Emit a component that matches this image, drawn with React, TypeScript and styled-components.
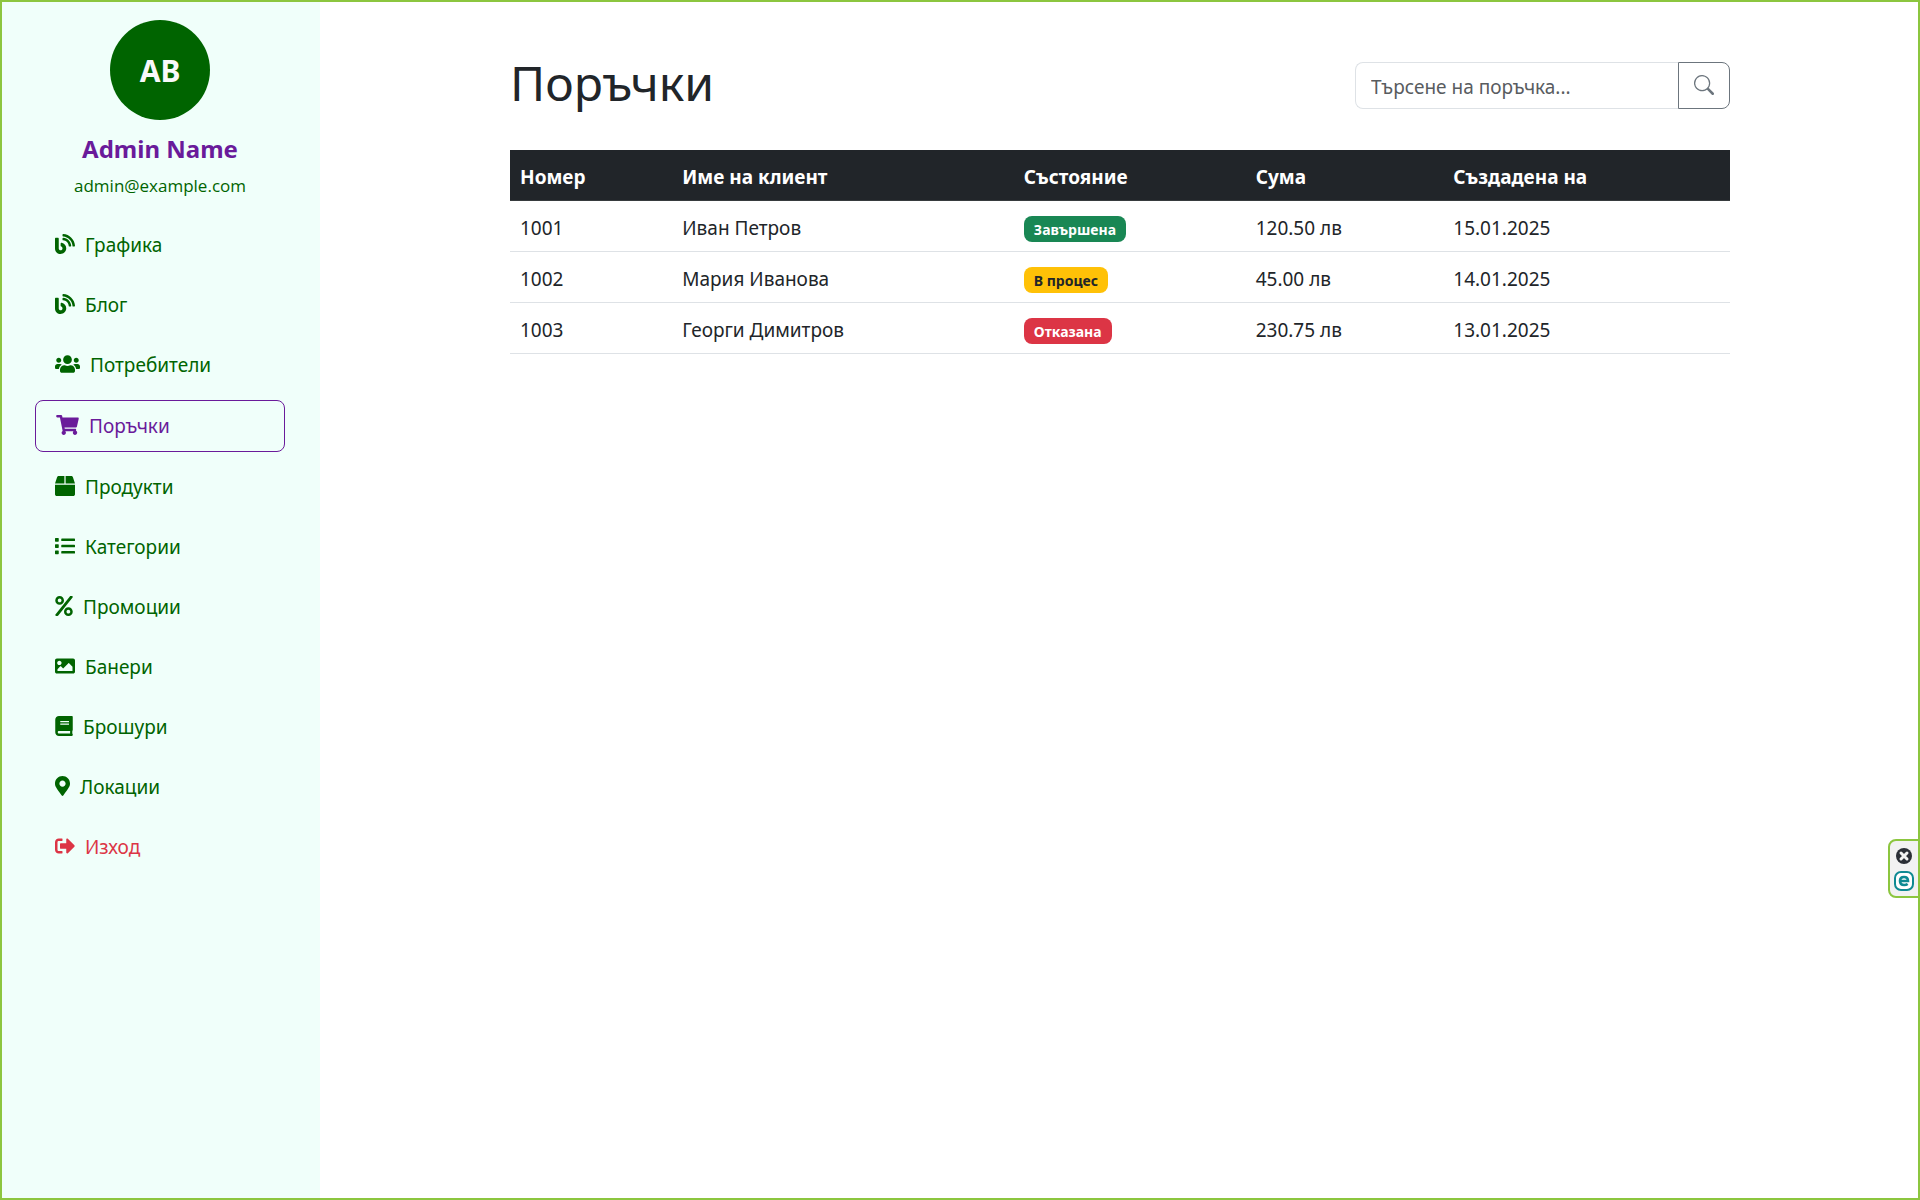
import React from "react";
import styled, { createGlobalStyle } from "styled-components";
import type { IconType } from "react-icons";
import {
  FaBlog,
  FaUsers,
  FaShoppingCart,
  FaBox,
  FaList,
  FaPercent,
  FaImage,
  FaBook,
  FaMapMarkerAlt,
  FaSignOutAlt,
} from "react-icons/fa";
import { BsSearch } from "react-icons/bs";

const GlobalStyle = createGlobalStyle`
  *, *::before, *::after { box-sizing: border-box; }
  body {
    margin: 0;
    background: #fff;
    color: #212529;
    font-family: "Noto Sans", "Open Sans", sans-serif;
    font-size: 19px;
    line-height: 30px;
  }
`;

const Page = styled.div`
  display: flex;
  min-height: 100vh;
`;

const Sidebar = styled.aside`
  flex: 0 0 320px;
  display: flex;
  flex-direction: column;
  align-items: center;
  padding: 20px 35px;
  background: #f0fffa;
  color: #006400;
`;

const Avatar = styled.div`
  width: 100px;
  height: 100px;
  padding-top: 2px;
  border-radius: 50%;
  display: flex;
  align-items: center;
  justify-content: center;
  background: #006400;
  color: #f8f9fa;
  font-size: 30px;
  font-weight: 700;
`;

const AdminName = styled.h2`
  margin: 14px 0 6px;
  color: #6a1b9a;
  font-size: 24px;
  line-height: 30px;
  font-weight: 700;
`;

const Email = styled.p`
  margin: 0;
  font-family: "Open Sans", "Noto Sans", sans-serif;
  font-size: 17px;
  line-height: 32px;
`;

const Nav = styled.nav`
  align-self: stretch;
  display: flex;
  flex-direction: column;
  gap: 10px;
  margin-top: 18px;
`;

const NavLink = styled.a<{ $iconWidth: number; $active?: boolean; $danger?: boolean }>`
  display: flex;
  align-items: center;
  gap: 10px;
  padding: 10px 20px;
  border: ${(p) => (p.$active ? "1px solid #6a1b9a" : "0")};
  border-radius: 8px;
  color: ${(p) => (p.$active ? "#6a1b9a" : p.$danger ? "#dc3545" : "#006400")};
  text-decoration: none;

  svg {
    flex: none;
    width: ${(p) => p.$iconWidth}px;
    height: 20px;
    margin-bottom: 2px;
  }
`;

const Main = styled.main`
  flex: 1;
  padding: 50px 40px;
`;

const Container = styled.div`
  max-width: 1220px;
  margin: 0 auto;
`;

const Header = styled.header`
  display: flex;
  align-items: center;
  justify-content: space-between;
  margin-bottom: 30px;
`;

const Title = styled.h1`
  margin: 0 0 4px;
  font-size: 48px;
  line-height: 66px;
  font-weight: 400;
`;

const SearchForm = styled.form`
  display: flex;
  width: 375px;
`;

const SearchInput = styled.input`
  flex: 1;
  min-width: 0;
  height: 47px;
  padding: 10px 15px 6px;
  border: 1px solid #dee2e6;
  border-right: 0;
  border-radius: 8px 0 0 8px;
  background: #fff;
  color: #212529;
  font: inherit;

  &::placeholder {
    color: #595c5f;
    opacity: 1;
  }
`;

const SearchButton = styled.button`
  width: 52px;
  display: flex;
  align-items: center;
  justify-content: center;
  padding: 0;
  border: 1px solid #6c757d;
  border-radius: 0 8px 8px 0;
  background: transparent;
  color: #6c757d;
  font-size: 20px;
`;

const Table = styled.table`
  width: 100%;
  table-layout: fixed;
  border-collapse: collapse;
`;

const HeadCell = styled.th<{ $width?: string }>`
  width: ${(p) => p.$width ?? "auto"};
  padding: 12px 10px 8px;
  border-bottom: 1px solid #373b3e;
  background: #212529;
  color: #fff;
  font-weight: 700;
  text-align: left;
`;

const Cell = styled.td`
  padding: 12px 10px 8px;
  border-bottom: 1px solid #dee2e6;
`;

const tones = {
  success: { background: "#198754", color: "#fff" },
  warning: { background: "#ffc107", color: "#212529" },
  danger: { background: "#dc3545", color: "#fff" },
};

const Badge = styled.span<{ $tone: keyof typeof tones }>`
  display: inline-block;
  padding: 6px 10px 4px;
  border-radius: 8px;
  background: ${(p) => tones[p.$tone].background};
  color: ${(p) => tones[p.$tone].color};
  font-size: 14px;
  line-height: 16px;
  font-weight: 700;
`;

const FrameOverlay = styled.div`
  position: fixed;
  inset: 0;
  border: 2px solid #8cc63f;
  pointer-events: none;
`;

const SideTab = styled.div`
  position: fixed;
  right: 0;
  top: 839px;
  display: flex;
  flex-direction: column;
  align-items: center;
  gap: 5px;
  padding: 5px 4px;
  border: 2px solid #8cc63f;
  border-radius: 8px 0 0 8px;
  background: #f2f2f2;
`;

const TabButton = styled.button`
  display: flex;
  padding: 0;
  border: 0;
  background: none;
`;

type NavItem = {
  label: string;
  icon: IconType;
  iconWidth: number;
  active?: boolean;
  danger?: boolean;
};

const navItems: NavItem[] = [
  { label: "Графика", icon: FaBlog, iconWidth: 20 },
  { label: "Блог", icon: FaBlog, iconWidth: 20 },
  { label: "Потребители", icon: FaUsers, iconWidth: 25 },
  { label: "Поръчки", icon: FaShoppingCart, iconWidth: 23, active: true },
  { label: "Продукти", icon: FaBox, iconWidth: 20 },
  { label: "Категории", icon: FaList, iconWidth: 20 },
  { label: "Промоции", icon: FaPercent, iconWidth: 18 },
  { label: "Банери", icon: FaImage, iconWidth: 20 },
  { label: "Брошури", icon: FaBook, iconWidth: 18 },
  { label: "Локации", icon: FaMapMarkerAlt, iconWidth: 15 },
  { label: "Изход", icon: FaSignOutAlt, iconWidth: 20, danger: true },
];

const orders: {
  id: number;
  client: string;
  status: string;
  tone: keyof typeof tones;
  total: string;
  date: string;
}[] = [
  { id: 1001, client: "Иван Петров", status: "Завършена", tone: "success", total: "120.50 лв", date: "15.01.2025" },
  { id: 1002, client: "Мария Иванова", status: "В процес", tone: "warning", total: "45.00 лв", date: "14.01.2025" },
  { id: 1003, client: "Георги Димитров", status: "Отказана", tone: "danger", total: "230.75 лв", date: "13.01.2025" },
];

export default function App() {
  return (
    <>
      <GlobalStyle />
      <Page>
        <Sidebar>
          <Avatar>AB</Avatar>
          <AdminName>Admin Name</AdminName>
          <Email>admin@example.com</Email>
          <Nav>
            {navItems.map(({ label, icon: Icon, iconWidth, active, danger }) => (
              <NavLink key={label} href="#" $iconWidth={iconWidth} $active={active} $danger={danger}>
                <Icon aria-hidden />
                <span>{label}</span>
              </NavLink>
            ))}
          </Nav>
        </Sidebar>
        <Main>
          <Container>
            <Header>
              <Title>Поръчки</Title>
              <SearchForm role="search" onSubmit={(e) => e.preventDefault()}>
                <SearchInput type="text" aria-label="Търсене на поръчка" placeholder="Търсене на поръчка..." />
                <SearchButton type="submit" aria-label="Търсене">
                  <BsSearch aria-hidden />
                </SearchButton>
              </SearchForm>
            </Header>
            <Table>
              <thead>
                <tr>
                  <HeadCell $width="13.3%">Номер</HeadCell>
                  <HeadCell $width="28%">Име на клиент</HeadCell>
                  <HeadCell $width="19%">Състояние</HeadCell>
                  <HeadCell $width="16.2%">Сума</HeadCell>
                  <HeadCell>Създадена на</HeadCell>
                </tr>
              </thead>
              <tbody>
                {orders.map((o) => (
                  <tr key={o.id}>
                    <Cell>{o.id}</Cell>
                    <Cell>{o.client}</Cell>
                    <Cell>
                      <Badge $tone={o.tone}>{o.status}</Badge>
                    </Cell>
                    <Cell>{o.total}</Cell>
                    <Cell>{o.date}</Cell>
                  </tr>
                ))}
              </tbody>
            </Table>
          </Container>
        </Main>
      </Page>
      <FrameOverlay />
      <SideTab>
        <TabButton type="button" aria-label="Затвори">
          <svg width="20" height="20" viewBox="0 0 20 20" aria-hidden>
            <circle cx="10" cy="10" r="8" fill="#2b2f36" />
            <path d="M7 7l6 6M13 7l-6 6" stroke="#f2f2f2" strokeWidth="3" strokeLinecap="round" />
          </svg>
        </TabButton>
        <TabButton type="button" aria-label="Разширение">
          <svg width="20" height="20" viewBox="0 0 20 20" aria-hidden>
            <rect x="1" y="1" width="18" height="18" rx="6" fill="#fff" stroke="#0e8a93" strokeWidth="2" />
            <path d="M6 10h8c0-2.700-1.600-4-4-4S6 7.500 6 10s1.600 4 4.200 4c1.400 0 2.500-.3 3.500-1" fill="none" stroke="#0e8a93" strokeWidth="2.600" />
          </svg>
        </TabButton>
      </SideTab>
    </>
  );
}
